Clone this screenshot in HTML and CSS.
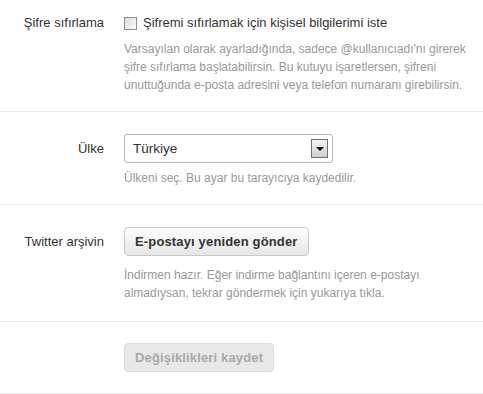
FILE: index.html
```html
<!DOCTYPE html>
<html lang="tr">
<head>
  <meta charset="UTF-8" />
  <title>Hesap ayarları</title>
  <link rel="stylesheet" href="styles.css">
</head>
<body>
  <div class="settings">
    <div class="row row-reset">
      <div class="label label-top">Şifre sıfırlama</div>
      <div class="field">
        <label class="check">
          <span class="box"></span>
          Şifremi sıfırlamak için kişisel bilgilerimi iste
        </label>
        <p class="help">Varsayılan olarak ayarladığında, sadece @kullanıcıadı'nı girerek şifre sıfırlama başlatabilirsin. Bu kutuyu işaretlersen, şifreni unuttuğunda e-posta adresini veya telefon numaranı girebilirsin.</p>
      </div>
    </div>

    <div class="row row-country">
      <div class="label">Ülke</div>
      <div class="field">
        <div class="select">
          <span>Türkiye</span>
          <span class="arrow"></span>
        </div>
        <p class="help help-select">Ülkeni seç. Bu ayar bu tarayıcıya kaydedilir.</p>
      </div>
    </div>

    <div class="row row-archive">
      <div class="label">Twitter arşivin</div>
      <div class="field">
        <button class="btn">E-postayı yeniden gönder</button>
        <p class="help help-btn">İndirmen hazır. Eğer indirme bağlantını içeren e-postayı almadıysan, tekrar göndermek için yukarıya tıkla.</p>
      </div>
    </div>

    <div class="row row-save">
      <div class="label"></div>
      <div class="field">
        <button class="btn" disabled>Değişiklikleri kaydet</button>
      </div>
    </div>
  </div>
</body>
</html>
```

FILE: styles.css
```css
body {
  margin: 0;
  font-family: "Liberation Sans", Arial, sans-serif;
  background-color: #fff;
  color: #333;
}
.settings {
  width: 483px;
}
.row {
  display: flex;
  border-bottom: 1px solid #e8e8e8;
  padding: 20px 0;
}
.row-reset {
  padding: 14px 0 17px;
}
.row-country {
  padding: 22px 0 17px;
}
.row-archive {
  padding: 22px 0 19px;
}
.row-save {
  padding: 21px 0 21px;
}
.label {
  width: 104px;
  flex: none;
  text-align: right;
  font-size: 13px;
  padding-top: 7px;
  margin-right: 20px;
}
.label-top {
  padding-top: 1px;
}
.field {
  flex: 1;
}
.check {
  display: flex;
  align-items: center;
  font-size: 13px;
  line-height: 18px;
}
.box {
  width: 11px;
  height: 11px;
  border: 1px solid #8f8f8f;
  background: linear-gradient(135deg, #dcdcdc, #fbfbfb);
  margin-right: 6px;
}
.help {
  margin: 8px 0 0;
  font-size: 12px;
  line-height: 18px;
  color: #999;
  padding-right: 8px;
}
.help-select {
  margin-top: 6px;
}
.help-btn {
  margin-top: 10px;
}
.select {
  width: 195px;
  height: 27px;
  border: 1px solid #b5b5b5;
  border-radius: 3px;
  display: flex;
  align-items: center;
  justify-content: space-between;
  padding: 0 4px 0 8px;
  font-size: 13.5px;
}
.arrow {
  width: 15px;
  height: 17px;
  border: 1px solid #707070;
  background: linear-gradient(#f2f2f2, #cfcfcf);
  position: relative;
}
.arrow::after {
  content: "";
  position: absolute;
  left: 4px;
  top: 7px;
  border-left: 4px solid transparent;
  border-right: 4px solid transparent;
  border-top: 4px solid #000;
}
.btn {
  font-family: "Liberation Sans", Arial, sans-serif;
  font-size: 13px;
  font-weight: bold;
  letter-spacing: 0.15px;
  color: #333;
  height: 29px;
  padding: 0 10px;
  border: 1px solid #c8c8c8;
  border-radius: 4px;
  background: linear-gradient(#fefefe, #e6e6e6);
}
.btn:disabled {
  color: #a8a8a8;
  background: #e8e8e8;
  border-color: #dcdcdc;
}
```
